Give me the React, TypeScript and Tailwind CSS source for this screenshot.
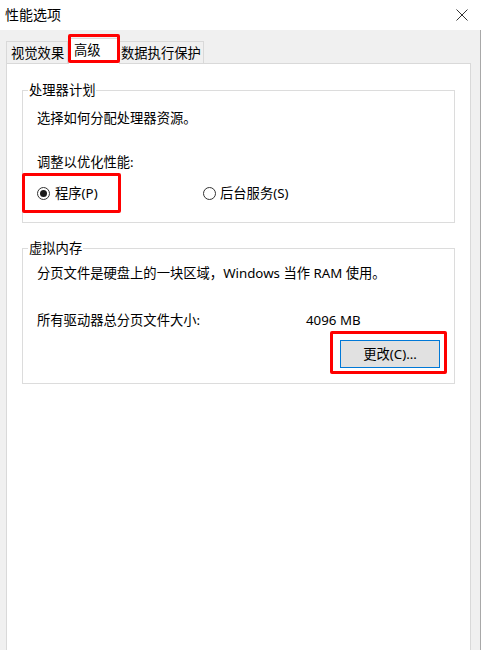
import React from "react";

function Radio({ checked }: { checked?: boolean }) {
  return (
    <span className="w-[13px] h-[13px] rounded-full border border-[#333333] bg-white flex items-center justify-center shrink-0">
      {checked && <span className="w-[7px] h-[7px] rounded-full bg-[#1a1a1a]" />}
    </span>
  );
}

export default function App() {
  return (
    <div
      className="relative w-[481px] h-[650px] overflow-hidden bg-[#f0f0f0] text-black text-[13.3px] leading-[20px]"
      style={{ fontFamily: '"Noto Sans", "Noto Sans CJK SC", sans-serif' }}
    >
      {/* Title bar */}
      <div className="h-[30px] bg-white flex items-center justify-between pl-[5px] pr-[13px]">
        <span className="text-[14px]">性能选项</span>
        <svg width="12" height="12" viewBox="0 0 12 12" className="text-[#333]">
          <path d="M0.5 0.5 L11.5 11.5 M11.5 0.5 L0.5 11.5" stroke="currentColor" strokeWidth="1" />
        </svg>
      </div>

      {/* Body */}
      <div className="flex flex-col h-[620px] border-r border-[#a8a8a8] pl-[6px] pr-[9px]">
        {/* Tabs */}
        <div className="flex items-end h-[33px] pt-[7px] relative z-10">
          <div className="w-[62px] h-[22px] border border-b-0 border-[#d9d9d9] bg-[#f0f0f0] pl-[4px] flex items-center">
            视觉效果
          </div>
          <div className="w-[52px] h-[26px] mb-[-1px] border border-b-0 border-[#d9d9d9] bg-white pl-[5px] pt-[1px] flex items-start">
            高级
          </div>
          <div className="w-[84px] h-[22px] border border-b-0 border-l-0 border-[#d9d9d9] bg-[#f0f0f0] pl-[1px] flex items-center">
            数据执行保护
          </div>
        </div>

        {/* Tab panel */}
        <div className="flex-1 bg-white border border-[#d9d9d9] border-b-0 px-[15px] pt-[16px]">
          <fieldset className="border border-[#dcdcdc] pl-[5px] pr-[5px] pb-[19px]">
            <legend className="px-[1px] leading-[20px]">处理器计划</legend>
            <div className="pl-[9px]">
              <div className="mt-[8px]">选择如何分配处理器资源。</div>
              <div className="mt-[24px]">调整以优化性能:</div>
              <div className="mt-[11px] flex items-center">
                <div className="w-[166px] flex items-center gap-[5px]">
                  <Radio checked />
                  <span>程序(P)</span>
                </div>
                <div className="flex items-center gap-[4px]">
                  <Radio />
                  <span>后台服务(S)</span>
                </div>
              </div>
            </div>
          </fieldset>

          <fieldset className="mt-[15px] border border-[#dcdcdc] pl-[5px] pr-[14px] pb-[15px]">
            <legend className="px-[1px] leading-[20px]">虚拟内存</legend>
            <div className="pl-[9px]">
              <div className="mt-[5px]">分页文件是硬盘上的一块区域，Windows 当作 RAM 使用。</div>
              <div className="mt-[27px] flex">
                <span className="w-[269px]">所有驱动器总分页文件大小:</span>
                <span>4096 MB</span>
              </div>
              <div className="mt-[10px] flex justify-end">
                <button className="w-[100px] h-[28px] border border-[#0078d7] bg-[#e1e1e1] flex items-center justify-center">
                  更改(C)...
                </button>
              </div>
            </div>
          </fieldset>
        </div>
      </div>

      {/* Red annotation boxes */}
      <div className="absolute left-[68px] top-[34px] w-[52px] h-[29px] border-[3px] border-[#ff0000] rounded-[2px] z-20" />
      <div className="absolute left-[22px] top-[173px] w-[99px] h-[40px] border-[3px] border-[#ff0000] rounded-[2px] z-20" />
      <div className="absolute left-[330px] top-[331px] w-[117px] h-[43px] border-[3px] border-[#ff0000] rounded-[2px] z-20" />
    </div>
  );
}
